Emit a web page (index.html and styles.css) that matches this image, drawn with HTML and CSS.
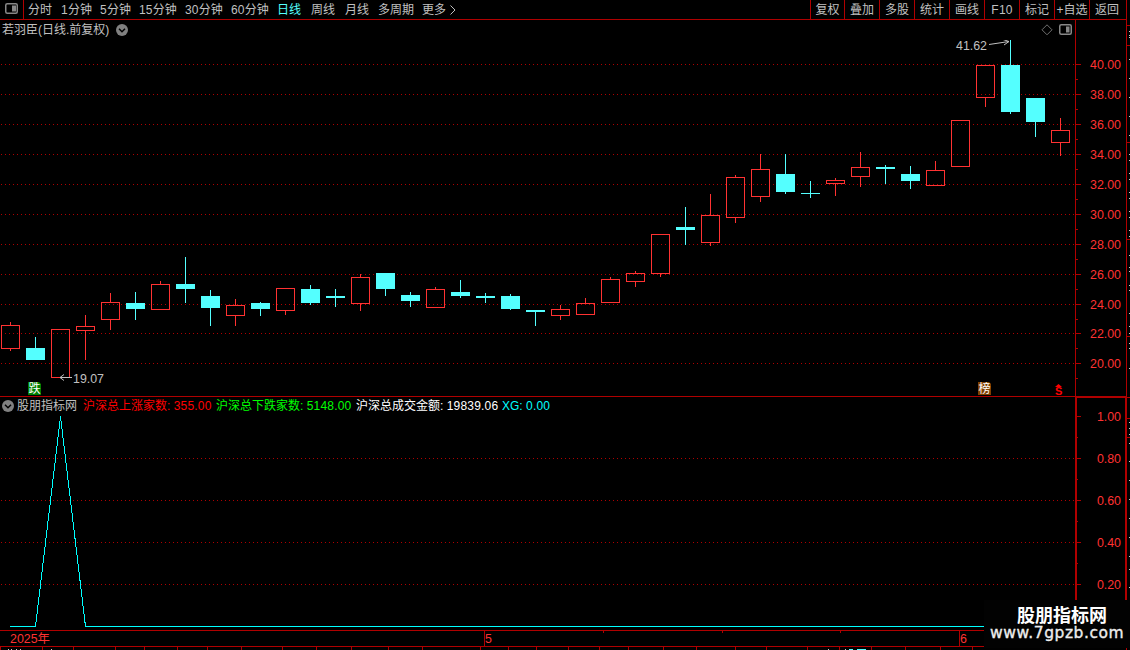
FILE: index.html
```html
<!DOCTYPE html>
<html lang="zh-CN">
<head>
<meta charset="utf-8">
<title>若羽臣 日线</title>
<link rel="stylesheet" href="styles.css">
</head>
<body>
<div class="app">
  <div class="main">
    <nav class="toolbar">
      <span class="toggle"><svg class="panel-icon" width="13" height="11" viewBox="0 0 13 11"><rect x=".75" y=".75" width="11.5" height="9.5" rx="1.5"/><rect class="solid" x="7" y="2.5" width="4" height="6"/></svg></span>
      <div class="periods">
        <span>分时</span><span><i>1</i>分钟</span><span><i>5</i>分钟</span><span><i>15</i>分钟</span><span><i>30</i>分钟</span><span><i>60</i>分钟</span><span class="active">日线</span><span>周线</span><span>月线</span><span>多周期</span><span class="more">更多<svg width="6" height="10" viewBox="0 0 6 10"><path d="M.5 .5 5 5 .5 9.5"/></svg></span>
      </div>
      <div class="tools">
        <span>复权</span><span>叠加</span><span>多股</span><span>统计</span><span>画线</span><span><i>F10</i></span><span>标记</span><span>+自选</span><span>返回</span>
      </div>
    </nav>

    <section class="panel price">
      <div class="plot">
        <header class="title">
          <span>若羽臣(日线.前复权)</span>
          <svg class="chevron" width="12" height="12" viewBox="0 0 12 12"><circle cx="6" cy="6" r="6"/><path d="M3 4.7 6 7.7 9 4.7"/></svg>
          <span class="view-icons">
            <svg width="12" height="12" viewBox="0 0 12 12"><path class="diamond" d="M6 .8 11 5.8 6 10.8 1 5.8Z"/></svg>
            <svg class="panel-icon" width="13" height="11" viewBox="0 0 13 11"><rect x=".75" y=".75" width="11.5" height="9.5" rx="1.5"/><rect class="solid" x="7" y="2.5" width="3.5" height="6"/></svg>
          </span>
        </header>
        <svg id="candles" width="1075" height="356" viewBox="0 40 1075 356"></svg>
      </div>
      <svg class="scale" id="price-scale" width="51" height="376" viewBox="1075 20 51 376"></svg>
    </section>

    <section class="panel indicator">
      <div class="plot">
        <header class="legend">
          <svg class="chevron" width="12" height="12" viewBox="0 0 12 12"><circle cx="6" cy="6" r="6"/><path d="M3 4.7 6 7.7 9 4.7"/></svg>
          <span class="name">股朋指标网</span>
          <span class="up">沪深总上涨家数: <i>355.00</i></span>
          <span class="down">沪深总下跌家数: <i>5148.00</i></span>
          <span class="amount">沪深总成交金额: <i>19839.06</i></span>
          <span class="xg">XG: <i>0.00</i></span>
        </header>
        <svg id="signal" width="1075" height="217" viewBox="0 413 1075 217"></svg>
      </div>
      <svg class="scale" id="signal-scale" width="50" height="233" viewBox="1075 397 50 233"></svg>
    </section>

    <svg id="timeline" width="1126" height="20" viewBox="0 630 1126 20"></svg>
  </div>
  <svg id="edge" width="5" height="650" viewBox="1125 0 5 650"></svg>
  <div class="brand"><b>股朋指标网</b><span>www.7gpzb.com</span></div>
</div>
<script src="chart.js"></script>
</body>
</html>
```
FILE: styles.css
```css
* { box-sizing: border-box; }
body {
  margin: 0;
  background: #000;
  color: #c0c0c0;
  font: 12px/18px "Liberation Sans", "Noto Sans CJK SC", sans-serif;
}
svg { display: block; flex: none; }
i { font-style: normal; letter-spacing: .2px; }
.app { position: relative; display: flex; width: 1130px; height: 650px; overflow: hidden; }
.main { width: 1126px; flex: none; }

.toolbar { display: flex; height: 20px; border-bottom: 1px solid #b00000; white-space: nowrap; line-height: 20px; }
.toggle { width: 24px; padding: 3px 0 0 5px; border-right: 1px solid #b00000; }
.periods { display: grid; grid-template-columns: 33px 39px 39px 46px 46px 46px 34px 34px 33px 44px 40px; padding-left: 4px; flex: 1; }
.periods .active { color: #54ffff; }
.more { display: flex; align-items: center; gap: 4px; height: 19px; }
.more svg { fill: none; stroke: #c0c0c0; }
.tools { display: grid; grid-template-columns: 34px repeat(7, 35px) 37px; }
.tools span { border-left: 1px solid #b00000; text-align: center; }
.tools span:last-child { padding-right: 2px; }

.panel-icon { fill: none; stroke: #888; stroke-width: 1.5; }
.panel-icon .solid { fill: #888; stroke: none; }
.diamond { fill: none; stroke: #707070; }
.chevron circle { fill: #808080; }
.chevron path { fill: none; stroke: #000; stroke-width: 1.5; }

.panel { display: flex; }
.plot { width: 1075px; flex: none; }
.title { display: flex; align-items: center; height: 20px; padding: 0 3px 1px 2px; gap: 7px; }
.view-icons { display: flex; gap: 6px; align-items: center; margin-left: auto; }
.indicator { border-top: 1px solid #b00000; }
.legend { display: flex; align-items: center; height: 16px; padding: 1px 0 0 2px; white-space: nowrap; }
.legend .name { width: 66px; margin-left: 3px; }
.legend .up { width: 133px; color: #f00; }
.legend .down { width: 140px; color: #0f0; }
.legend .amount { width: 146px; color: #fff; }
.legend .xg { color: #00ffff; }

text { font-family: "Liberation Sans", "Noto Sans CJK SC", sans-serif; font-size: 12.4px; }
.tick-text { fill: #ff3232; }
.line { fill: #b00000; shape-rendering: crispEdges; }
.grid { stroke: #b00000; stroke-dasharray: 1 3; shape-rendering: crispEdges; }
.rise { fill: #ff3232; shape-rendering: crispEdges; }
.rise-body { fill: none; stroke: #ff3232; shape-rendering: crispEdges; }
.fall { fill: #54ffff; shape-rendering: crispEdges; }
.signal-line { fill: none; stroke: #00ffff; shape-rendering: crispEdges; }
.note { fill: #c0c0c0; }
.arrow { fill: none; stroke: #c0c0c0; }
.tag { fill: #fff; font-size: 12px; }
.dividend { fill: #f00; font-size: 11px; font-weight: bold; }
.fragment { fill: #c8c8c8; shape-rendering: crispEdges; }
#edge { margin-left: -1px; }

.brand {
  position: absolute; left: 984px; top: 600px; width: 146px; height: 48px;
  background: #020202; color: #fff; white-space: nowrap;
}
.brand b { display: block; padding: 1px 0 0 33px; font: bold 18px/26px "Noto Sans CJK SC", sans-serif; }
.brand span { display: block; padding-left: 6px; color: #eee; font: 15.5px/12px "DejaVu Sans", sans-serif; letter-spacing: .55px; -webkit-text-stroke: .35px #eee; }
```
FILE: chart.js
```javascript
// Each candle: direction, body top, body bottom, high, low (in plot rows).
const candles = [
  ['r',325,349,322,351],['f',348,360,337,360],['r',329,378,329,378],['r',326,331,315,360],
  ['r',302,320,293,330],['f',303,309,292,320],['r',284,310,281,310],['f',284,289,257,303],
  ['f',296,308,290,326],['r',305,316,299,326],['f',303,309,302,316],['r',288,311,288,315],
  ['f',289,303,285,305],['f',296,298,289,307],['r',277,304,274,311],['f',273,289,273,296],
  ['f',295,301,292,307],['r',289,308,287,308],['f',292,296,280,298],['f',296,298,293,303],
  ['f',296,309,294,310],['f',310,312,310,326],['r',309,316,305,320],['r',303,315,298,315],
  ['r',279,303,277,303],['r',273,282,271,287],['r',234,274,234,277],['f',227,230,207,245],
  ['r',215,243,194,246],['r',177,218,175,223],['r',169,197,154,202],['f',174,192,154,194],
  ['f',193,194,181,198],['r',180,184,178,196],['r',167,177,152,187],['f',167,169,165,184],
  ['f',174,181,166,189],['r',170,186,161,186],['r',120,167,120,167],['r',65,98,65,107],
  ['f',65,112,40,114],['f',98,122,98,137],['r',130,143,118,156]
];
const bar = (x, y, w, h, c = 'line') => `<rect class="${c}" x="${x}" y="${y}" width="${w}" height="${h}"/>`;
const gridLine = y => `<path class="grid" d="M1 ${y + .5}H1075"/>`;
const fill = (id, parts) => { document.getElementById(id).innerHTML = parts.join(''); };

// Price plot
const priceRows = [64,94,124,154,184,214,244,274,304,333,363];
const plot = priceRows.map(gridLine);
candles.forEach(([dir, top, bottom, high, low], i) => {
  const x = 10 + 25 * i;
  const kind = dir === 'r' ? 'rise' : 'fall';
  if (high < top) plot.push(bar(x, high, 1, top - high, kind));
  if (low > bottom) plot.push(bar(x, bottom, 1, low - bottom, kind));
  plot.push(dir === 'r'
    ? `<rect class="rise-body" x="${x - 8.5}" y="${top + .5}" width="18" height="${bottom - top - 1}"/>`
    : bar(x - 9, top, 19, bottom - top, kind));
});
plot.push(
  '<path class="arrow" d="M72 377.5H60M64 374.5 60 377.5 64 380.5"/>',
  '<text class="note" x="73" y="383" textLength="31">19.07</text>',
  '<path class="arrow" d="M989 44.5 1009 41.5M1003 39.5 1009 41.5 1004 45"/>',
  '<text class="note" x="956" y="50" textLength="31">41.62</text>',
  '<path fill="#008000" d="M28 382h11l2 2v11H28z"/><text class="tag" x="28.5" y="393">跌</text>',
  '<path fill="#804000" d="M978 382h11l2 2v11H978z"/><text class="tag" x="978.5" y="393">榜</text>',
  '<path fill="#f00" d="M1055 387 1058.5 384 1062 387z"/><text class="dividend" x="1055" y="395">S</text>'
);
fill('candles', plot);

// Scales
const scale = (rows, labels, thick, minor) => rows.flatMap((y, i) => {
  const short = labels[i].length < 5;
  return [
    bar(1075 + thick, y, 6 - thick, 1),
    bar(1075 + thick, y + minor, 3 - thick, 1),
    `<text class="tick-text" x="${short ? 1097 : 1090}" y="${y + 5}" textLength="${short ? 24 : 31}">${labels[i]}</text>`
  ];
});
fill('price-scale', [bar(1075, 20, 1, 376),
  ...scale(priceRows, priceRows.map((_, i) => (40 - 2 * i).toFixed(2)), 1, 15)]);
const signalRows = [416,458,500,542,584];
fill('signal-scale', [bar(1075, 397, 2, 233), bar(1075, 397, 50, 1),
  ...scale(signalRows, ['1.00','0.80','0.60','0.40','0.20'], 2, 21)]);

// Signal curve
fill('signal', [...signalRows.slice(1).map(gridLine),
  '<path class="signal-line" d="M10 626.5H35.5L60.5 416.5 85.5 626.5H1075"/>']);

// Timeline
fill('timeline', [bar(0, 630, 1126, 1), bar(0, 646, 1126, 1),
  bar(484, 631, 1, 15), bar(959, 631, 1, 15),
  ...[603,722,840].map(x => bar(x, 631, 1, 2)),
  ...[0,42,73,115,144,177,207,241,282,316,351,388,422,480,508,536,568,599,628,663,696,735,766,807,839,871,905,940,972].map(x => bar(x, 647, 1, 3)),
  ...[8,11,16,20,51,828,845].map(x => bar(x, 649, 1, 1, 'fragment')),
  bar(849, 649, 4, 1, 'fall'), bar(857, 649, 9, 1, 'fall'),
  '<text class="tick-text" x="10" y="643" textLength="40">2025年</text>',
  '<text class="tick-text" x="485" y="643">5</text>',
  '<text class="tick-text" x="960" y="643">6</text>']);

// Border of the neighbouring pane
fill('edge', [bar(1126, 0, 1, 650), bar(1125, 396, 2, 234),
  ...[25,45,142,239,336,397,418,437].map(y => bar(1127, y, 3, 1)),
  ...[31,35,37,59,78,97,116,135,154,160,173,179,192,198,211,217,230,236,255,267,271,285,290,313,326,333,343,348,368,422,428,434,443,461,480,499,518,537,556,569,587].map(y => bar(1129, y, 1, 1, 'fragment'))]);
```
